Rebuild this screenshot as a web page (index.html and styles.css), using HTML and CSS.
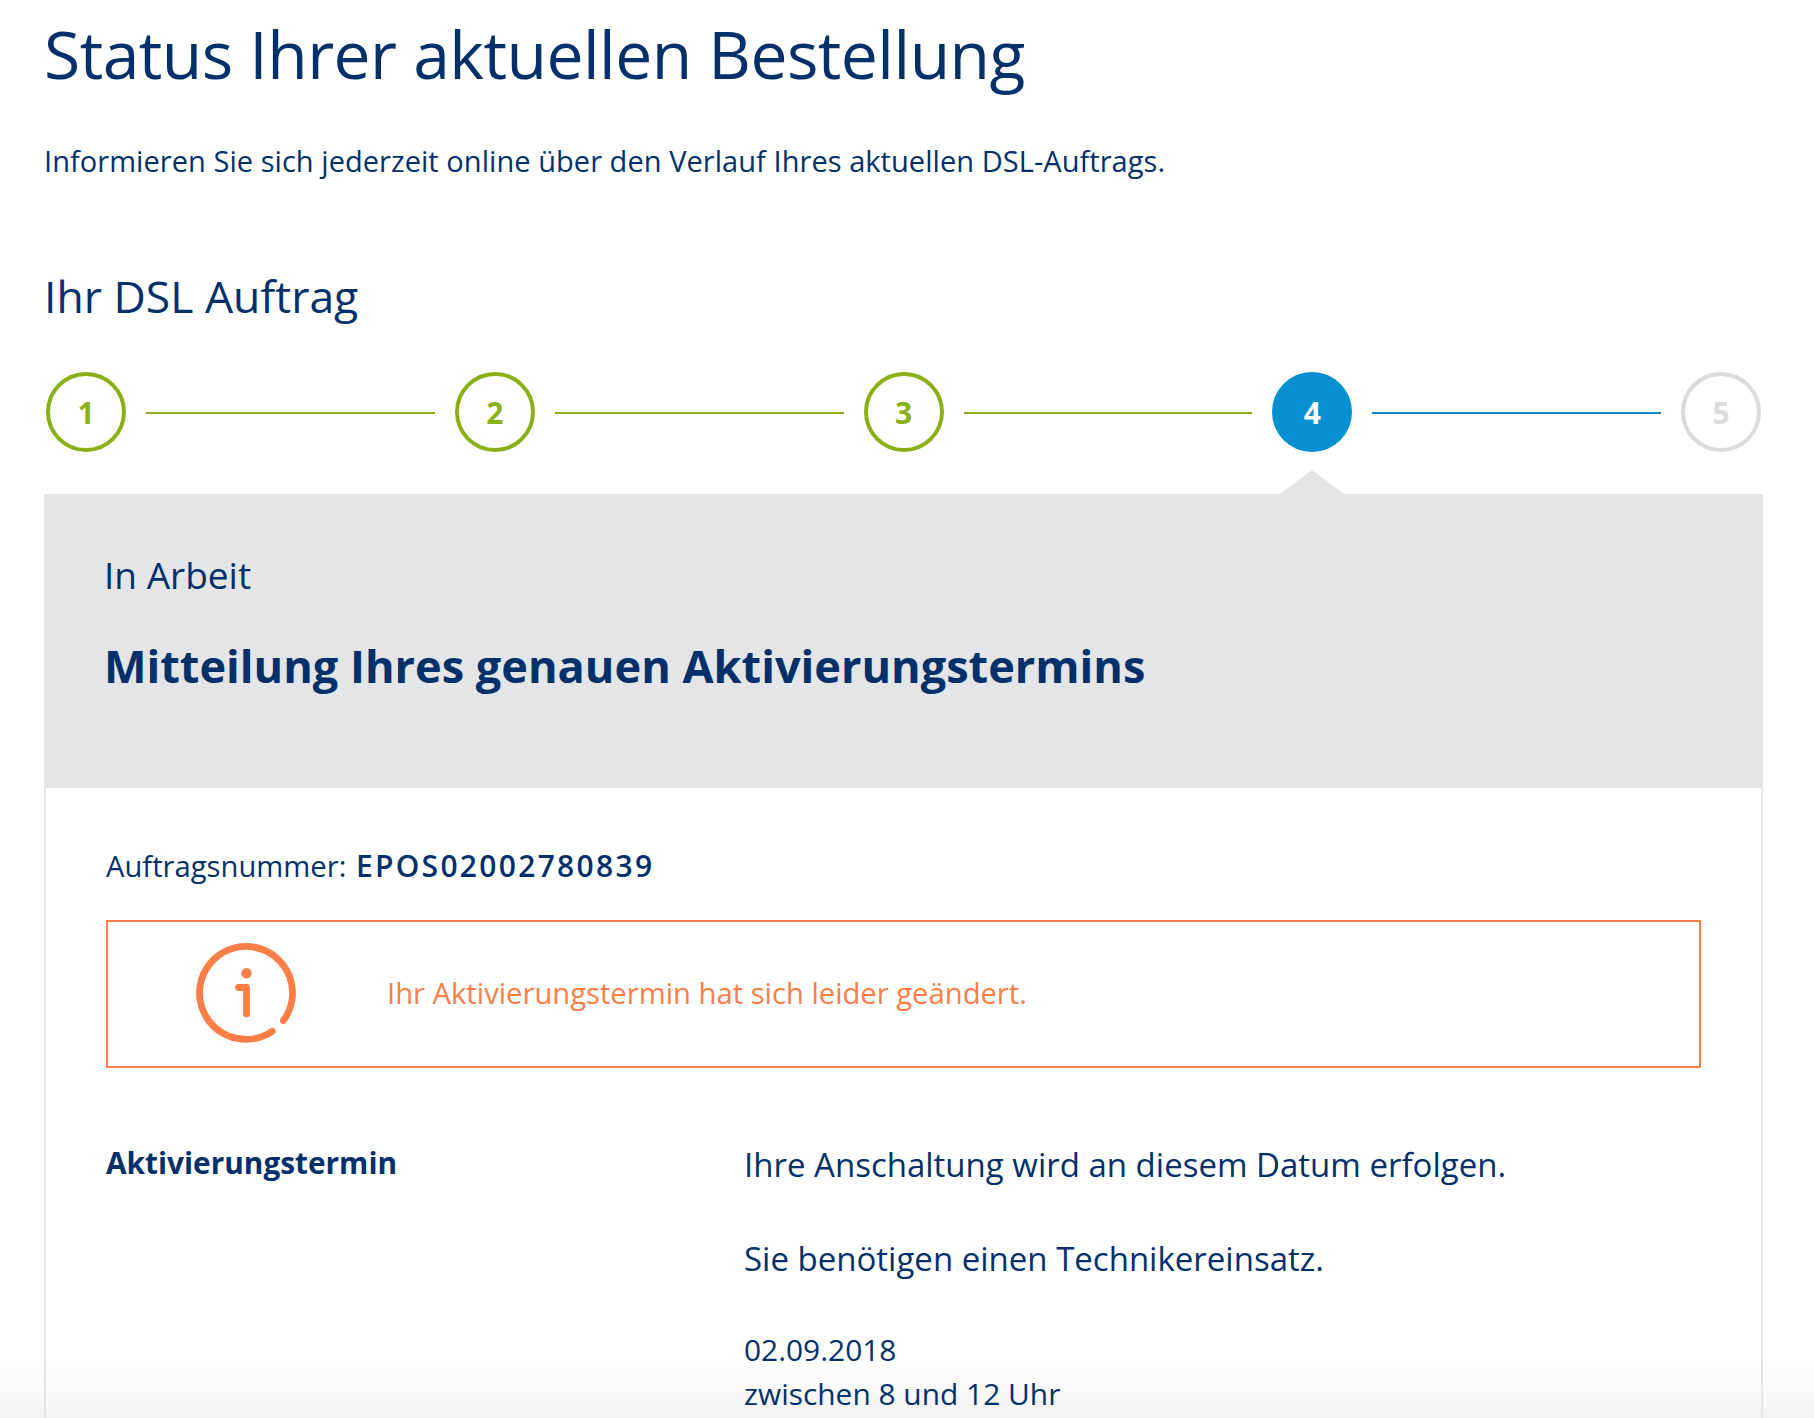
FILE: index.html
```html
<!DOCTYPE html>
<html lang="de">
<head>
<meta charset="utf-8">
<title>Status Ihrer aktuellen Bestellung</title>
<link rel="stylesheet" href="styles.css">
</head>
<body>
<main class="page">
  <h1 class="title">Status Ihrer aktuellen Bestellung</h1>
  <p class="intro">Informieren Sie sich jederzeit online über den Verlauf Ihres aktuellen DSL-Auftrags.</p>
  <h2 class="subtitle">Ihr DSL Auftrag</h2>
  <div class="steps">
    <span class="step done">1</span><span class="line done"></span>
    <span class="step done">2</span><span class="line done"></span>
    <span class="step done">3</span><span class="line done"></span>
    <span class="step current">4</span><span class="line current"></span>
    <span class="step todo">5</span>
  </div>
  <section class="card">
    <header class="card-head">
      <p class="state">In Arbeit</p>
      <h3 class="headline">Mitteilung Ihres genauen Aktivierungstermins</h3>
    </header>
    <div class="card-body">
      <p class="order">Auftragsnummer: <strong class="order-no">EPOS02002780839</strong></p>
      <div class="notice">
        <svg class="notice-icon" viewBox="0 0 100 100" aria-hidden="true">
          <path class="icon-stroke" d="M87.400 77.600A46.500 46.500 0 1 0 76.300 88.300"/>
          <path class="icon-stroke" d="M42.500 44.500H50.500V71"/>
          <circle class="icon-dot" cx="50.500" cy="30.200" r="5.200"/>
        </svg>
        <p class="notice-text">Ihr Aktivierungstermin hat sich leider geändert.</p>
      </div>
      <div class="details">
        <h4 class="details-label">Aktivierungstermin</h4>
        <div class="details-text">
          <p class="para">Ihre Anschaltung wird an diesem Datum erfolgen.</p>
          <p class="para">Sie benötigen einen Technikereinsatz.</p>
          <p class="date">02.09.2018<br>zwischen 8 und 12 Uhr</p>
        </div>
      </div>
    </div>
  </section>
</main>
</body>
</html>
```
FILE: styles.css
```css
html, body {
  margin: 0;
  height: 1418px;
  overflow: hidden;
}
html {
  background: linear-gradient(#fff 1358px, #f3f3f3 1418px);
}
body {
  font-family: "Open Sans", "Noto Sans", sans-serif;
  color: #01306b;
}
p, h1, h2, h3, h4 { margin: 0; font-weight: 400; }
.page {
  width: 1719px;
  height: 1418px;
  margin-left: 44px;
  display: flex;
  flex-direction: column;
}
.title {
  font-size: 66px;
  line-height: 80px;
  letter-spacing: -0.53px;
  padding-top: 13px;
}
.intro {
  font-size: 29px;
  letter-spacing: 0.05px;
  line-height: 40px;
  margin-top: 48px;
}
.subtitle {
  font-size: 44.500px;
  line-height: 60px;
  margin-top: 85px;
}
.steps {
  display: flex;
  align-items: center;
  gap: 20px;
  padding: 0 2px;
  margin-top: 46px;
}
.step {
  flex: none;
  box-sizing: border-box;
  width: 80px;
  height: 80px;
  border-radius: 50%;
  border: 4px solid;
  display: flex;
  align-items: center;
  justify-content: center;
  font-size: 30px;
  font-weight: 700;
}
.step.done { border-color: #8bb017; color: #8bb017; }
.step.current { border-color: #0690d2; background: #0690d2; color: #fff; }
.step.todo { border-color: #d9dbdc; color: #d9dbdc; }
.line { flex: 1; height: 2px; margin-top: 2px; }
.line.done { background: #8bb017; }
.line.current { background: #0e86c6; }
.card {
  position: relative;
  flex: 1;
  min-height: 0;
  margin-top: 42px;
  border: solid #e4e5e7;
  border-width: 0 2px;
}
.card::before {
  content: "";
  position: absolute;
  top: -24px;
  left: 1234px;
  width: 64px;
  height: 24px;
  background: #e4e5e7;
  clip-path: polygon(50% 0, 100% 100%, 0 100%);
}
.card-head {
  background: #e4e5e7;
  height: 294px;
  margin: 0 -2px;
  padding: 56px 0 0 60px;
  box-sizing: border-box;
}
.state { font-size: 37px; line-height: 50px; }
.headline {
  font-size: 45.100px;
  line-height: 60px;
  font-weight: 700;
  margin-top: 36px;
}
.card-body { padding: 58px 60px 0 60px; }
.order { font-size: 29.200px; line-height: 40px; }
.order-no {
  font-size: 30px;
  font-weight: 600;
  letter-spacing: 2.300px;
  margin-left: 2px;
}
.notice {
  display: flex;
  align-items: center;
  box-sizing: border-box;
  height: 148px;
  margin-top: 34px;
  border: 2px solid #fa7e46;
  padding: 0 0 2px 88px;
  gap: 91px;
  color: #fa7e46;
}
.notice-icon { width: 100px; height: 100px; flex: none; }
.icon-stroke {
  fill: none;
  stroke: #fa7e46;
  stroke-width: 6.800;
  stroke-linecap: round;
  stroke-linejoin: round;
}
.icon-dot { fill: #fa7e46; }
.notice-text { font-size: 29.200px; line-height: 40px; }
.details {
  display: grid;
  grid-template-columns: 638px 1fr;
  margin-top: 75px;
}
.details-label { font-size: 29.800px; line-height: 40px; font-weight: 700; }
.details-text { font-size: 33px; line-height: 44px; }
.para { margin-bottom: 50px; }
.date { font-size: 29.900px; line-height: 44px; margin-top: -3px; }
```
